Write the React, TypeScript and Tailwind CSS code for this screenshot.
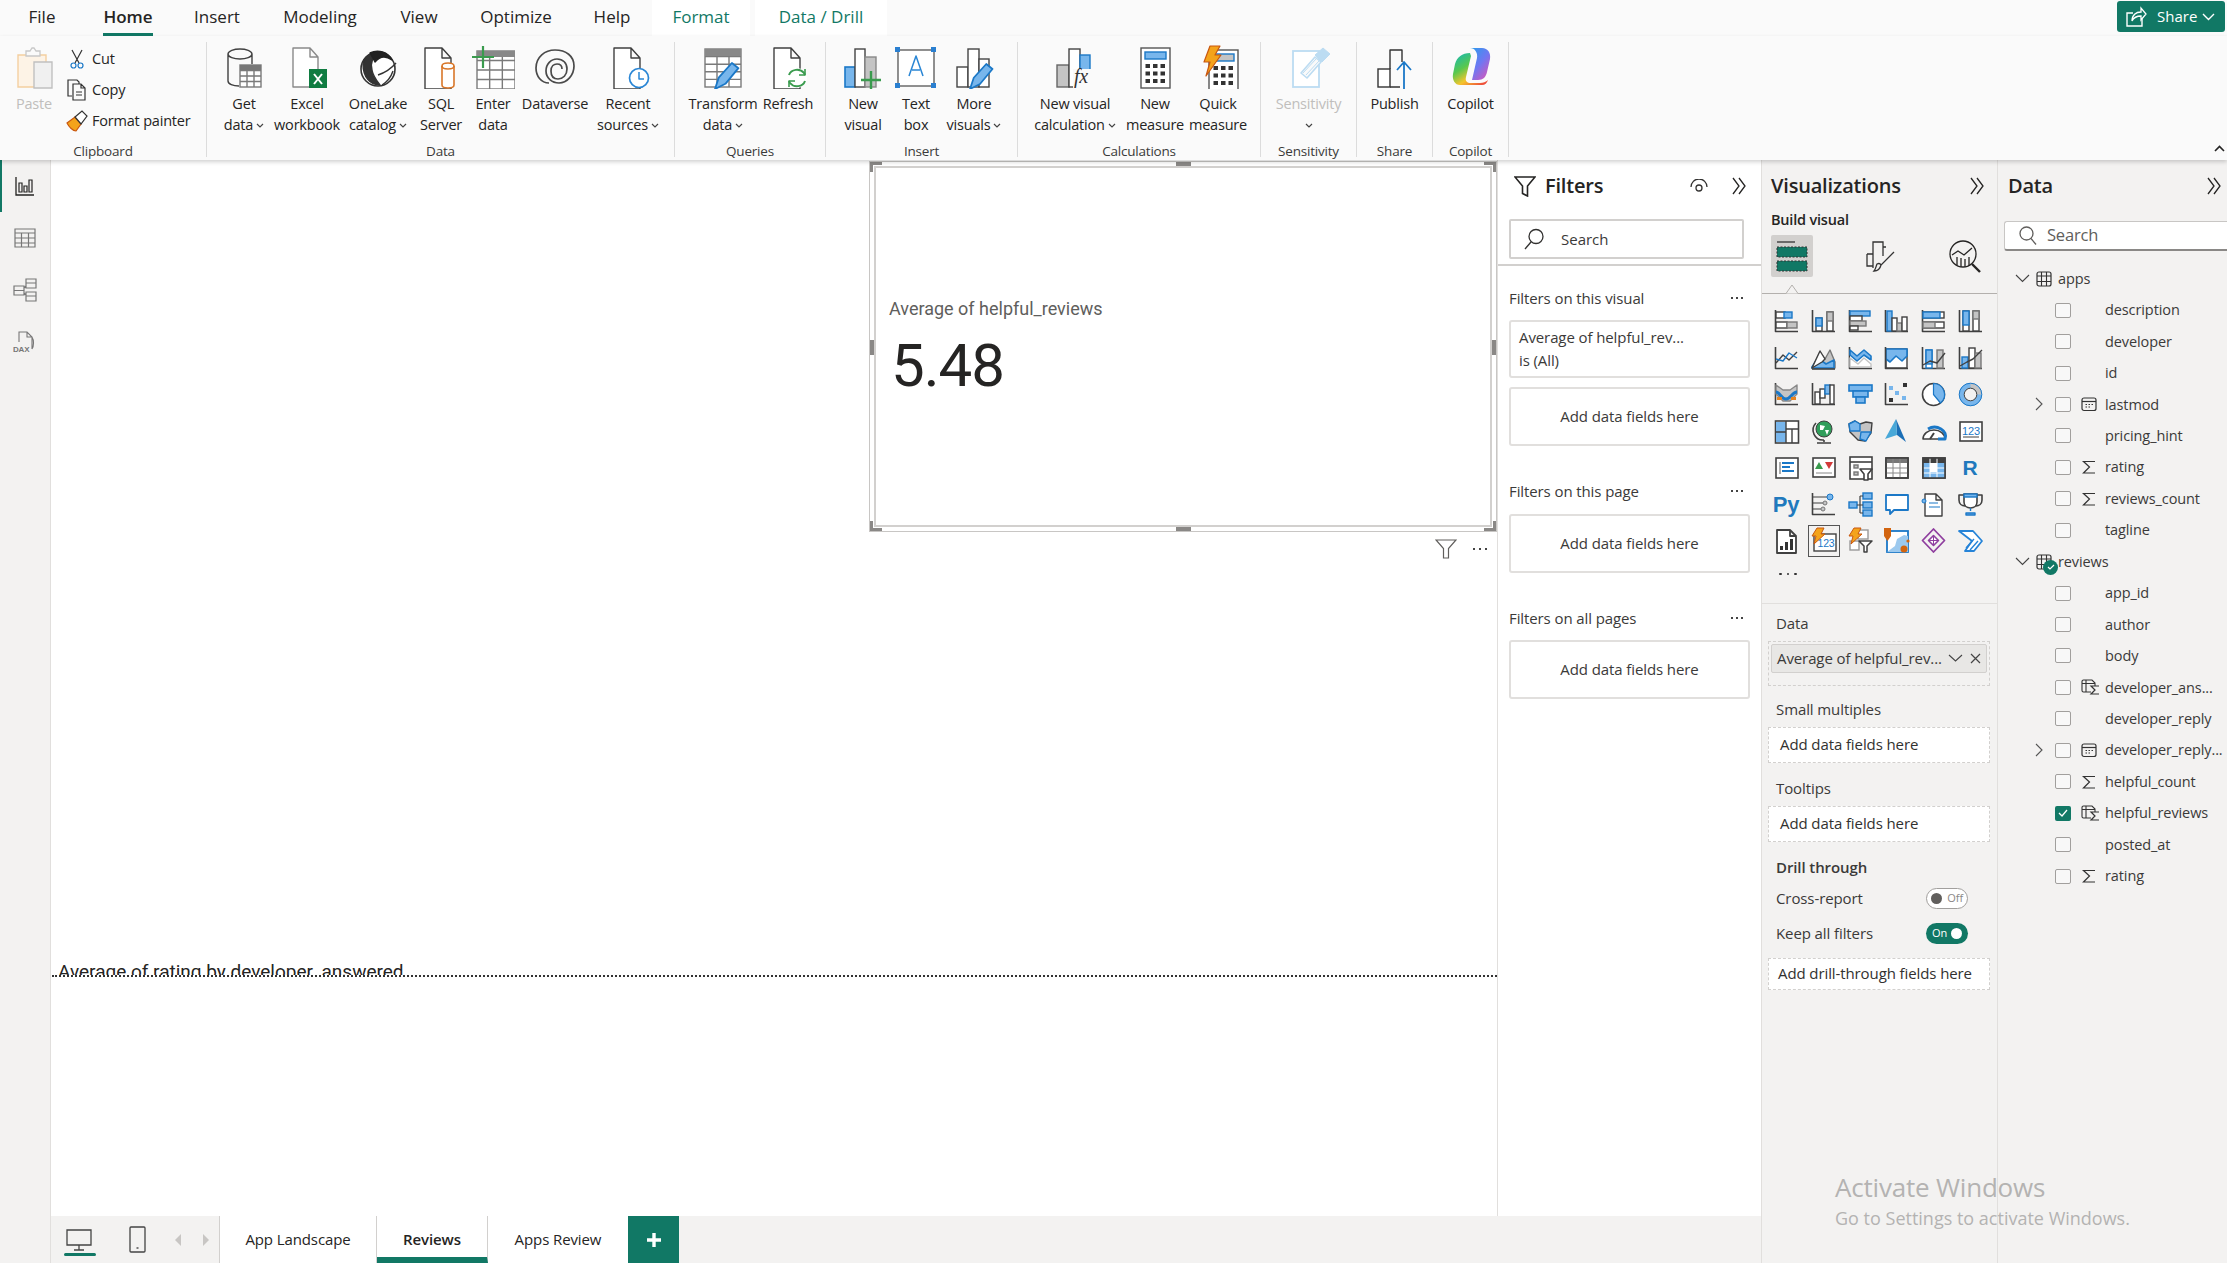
import React from "react";

const D = "#404040";
const B = "#1b78c7";
const L = "#78b6ec";
const G = "#c4c4c4";

const r = (x: number, y: number, w: number, h: number, f = "none", s = D, sw = 1.4) => (
  <rect x={x} y={y} width={w} height={h} fill={f} stroke={s} strokeWidth={sw} />
);
const p = (d: string, f = "none", s = D, sw = 1.4) => <path d={d} fill={f} stroke={s} strokeWidth={sw} strokeLinejoin="round" />;

function Ic({ w = 44, h = 44, vb, className = "", children }: { w?: number; h?: number; vb?: string; className?: string; children: React.ReactNode }) {
  return (
    <svg width={w} height={h} viewBox={vb ?? `0 0 ${w} ${h}`} fill="none" className={`shrink-0 ${className}`}>
      {children}
    </svg>
  );
}

const doc = (x: number, c = D) => p(`M${x} 3h17l9 10v31h-26z M${x + 17} 3v10h9`, "#fff", c, 1.4);
const grid = (x: number, y: number, w: number, h: number, cols: number, rows: number, c = "#7a7a7a") => {
  const ls: string[] = [];
  for (let i = 1; i < cols; i++) ls.push(`M${x + (w * i) / cols} ${y}v${h}`);
  for (let i = 1; i < rows; i++) ls.push(`M${x} ${y + (h * i) / rows}h${w}`);
  return (
    <>
      {r(x, y, w, h, "#fff", c)}
      {p(ls.join(" "), "none", c)}
    </>
  );
};
const calc = (x: number, y: number, f = L) => (
  <>
    {r(x, y, 29, 40, "#fff", "#555")}
    {r(x + 4, y + 4, 21, 7, f, B)}
    {[0, 1, 2].map((a) =>
      [0, 1, 2].map((b) => <rect key={`${a}${b}`} x={x + 4.5 + b * 7.5} y={y + 16 + a * 7.5} width={4.5} height={4} fill="#333" />)
    )}
  </>
);

const ribbon: Record<string, React.ReactNode> = {
  get: (
    <>
      {p("M6 9v27c0 3 5 5 11 5 M6 9c0-3 6-5 12-5s12 2 12 5-6 5-12 5-12-2-12-5z M30 9v10")}
      {grid(18, 20, 21, 22, 3, 4)}
      <rect x={18} y={20} width={21} height={5} fill="#777" />
    </>
  ),
  excel: (
    <>
      {p("M8 3h17l8 9v30H8z M25 3v9h8", "#fff", "#8a8a8a")}
      <rect x={24} y={24} width={18} height={19} fill="#107c41" />
      {p("M29 29l8 10M37 29l-8 10", "none", "#fff", 2)}
    </>
  ),
  lake: (
    <>
      <circle cx={22} cy={24} r={17} fill="#fff" stroke="#333" strokeWidth={1.6} />
      {p("M7 19c1-8 10-12 16-11-6 3-9 8-7 17 1 6 5 11 8 15-10 0-17-8-17-21z", "#333", "#333")}
      {p("M14 8c8-4 18-1 22 7-7-5-13-3-17 2z", "#222", "#222")}
      {p("M22 30c6-2 12-5 18-12M26 40c5-3 9-8 11-14", "none", "#333", 1.4)}
    </>
  ),
  sql: (
    <>
      {doc(6)}
      <path d="M23 21c0-2 3-3 6-3s6 1 6 3v19c0 2-3 3-6 3s-6-1-6-3z" fill="#fff" stroke="#d9772a" strokeWidth={1.6} />
      {p("M23 21c0 2 3 3 6 3s6-1 6-3", "none", "#d9772a", 1.6)}
    </>
  ),
  enter: (
    <>
      {grid(6, 6, 38, 38, 3, 4)}
      <rect x={6} y={6} width={38} height={6} fill="#888" />
      {p("M12 1v22M1 12h22", "none", "#3a9b4e", 2.2)}
    </>
  ),
  verse: (
    <>
      {p("M16 38c-8 0-13-7-13-15C3 12 12 5 22 5c11 0 19 6 19 16 0 9-7 17-15 17-7 0-13-5-13-12s5-12 11-12 10 4 10 10-4 10-9 10-7-3-7-8 3-7 6-7 5 2 5 5", "none", "#4a4a4a", 1.7)}
    </>
  ),
  recent: (
    <>
      {doc(8)}
      <circle cx={33} cy={33} r={9.5} fill="#fff" stroke="#2a86d5" strokeWidth={1.7} />
      {p("M33 27v7h5", "none", "#2a86d5", 1.5)}
    </>
  ),
  transform: (
    <>
      {grid(4, 4, 36, 38, 3, 5)}
      <rect x={4} y={4} width={36} height={7} fill="#888" />
      <g transform="translate(14 18) scale(1.3)">{p("M0 20l3-9L13 0l5 4L8 16z", L, B)}</g>
    </>
  ),
  refresh: (
    <>
      {doc(8)}
      <circle cx={31} cy={33} r={10} fill="#fff" stroke="none" />
      {p("M23 30c2-6 11-7 15-2l1 2M39 36c-2 6-11 7-15 2l-1-2", "none", "#3a9b4e", 2)}
      {p("M39 24v6h-6M23 42v-6h6", "none", "#3a9b4e", 1.6)}
    </>
  ),
  newv: (
    <>
      <rect x={4} y={22} width={10} height={20} fill={L} stroke={B} strokeWidth={1.6} />
      {r(14, 4, 10, 38, "#fff", "#444")}
      {r(24, 12, 11, 30, G, "#888")}
      {p("M30 26v18M20 35h20", "none", "#3a9b4e", 2.4)}
    </>
  ),
  text: (
    <>
      {r(4, 5, 36, 36, "#fff", "#555", 1.3)}
      {[[1, 2], [37, 2], [1, 38], [37, 38]].map(([x, y]) => (
        <rect key={`${x}${y}`} x={x} y={y} width={5} height={5} fill="#2a7fd0" />
      ))}
      {p("M15 31l7-20 7 20M18 25h8", "none", "#2a86d5", 1.5)}
    </>
  ),
  more: (
    <>
      {r(5, 22, 11, 20, "#fff", "#444")}
      {r(16, 4, 11, 38, "#fff", "#444")}
      {r(27, 14, 10, 28, "#fff", "#444")}
      <g transform="translate(18 19) scale(1.25)">{p("M0 20l3-9L13 0l5 4L8 16z", L, B)}</g>
    </>
  ),
  fx: (
    <>
      <rect x={4} y={20} width={12} height={22} fill={G} stroke="#666" strokeWidth={1.4} />
      {r(16, 4, 11, 38, "#fff", "#444")}
      <rect x={27} y={10} width={10} height={16} fill={L} stroke={B} strokeWidth={1.4} />
      <rect x={20} y={24} width={24} height={20} fill="#fafafa" />
      <text x={21} y={38} fontFamily="'Liberation Serif',serif" fontStyle="italic" fontSize={20} fill="#333">fx</text>
    </>
  ),
  measure: calc(8, 3),
  quick: (
    <>
      {calc(13, 5, G)}
      {p("M14 1h10l-5 9h6L10 31l4-14H8z", "#f4a31b", "#c9570f", 1.2)}
    </>
  ),
  sens: (
    <>
      {r(6, 6, 26, 36, "#fff", "#bcdcf2", 1.8)}
      {p("M14 28l14-16 6 5-14 16z", "#fafafa", "#bcdcf2", 1.6)}
      {p("M28 10l8-7 7 6-8 8z", "#bcdcf2", "#bcdcf2", 1)}
      {p("M16 28l13-14M19 30l13-14", "none", "#bcdcf2", 1)}
    </>
  ),
  publish: (
    <>
      {r(5, 24, 12, 18, "#fff", "#333")}
      {p("M17 24V5h12v12M17 42h10", "none", "#333")}
      {p("M31 44V18M24 25l7-8 7 8", "none", "#1b78c7", 1.8)}
    </>
  ),
  copilot: (
    <>
      <defs>
        <linearGradient id="cp1" x1="0" y1="0" x2="1" y2="1">
          <stop offset="0" stopColor="#16a6ea" />
          <stop offset="0.55" stopColor="#6f78f2" />
          <stop offset="1" stopColor="#e84fb0" />
        </linearGradient>
        <linearGradient id="cp2" x1="0.1" y1="0" x2="0.8" y2="1">
          <stop offset="0" stopColor="#17b9b0" />
          <stop offset="0.4" stopColor="#58c84e" />
          <stop offset="0.7" stopColor="#f5c52c" />
          <stop offset="1" stopColor="#ee4f3a" />
        </linearGradient>
      </defs>
      <path d="M15 3h18c6 0 9 5 8 11l-3 13c-1 5-4 8-9 8h-6l5-22c1-5-2-10-7-10z" fill="url(#cp1)" />
      <path d="M21 8c-8 0-13 4-15 11l-2 10c-1 6 2 11 7 11h22c3 0 5-2 6-5-2 2-5 3-8 3h-9c-4 0-6-2-5-6l5-21z" fill="url(#cp2)" />
    </>
  ),
};

const Ax = p("M1.5 1v21.5H24", "none", D, 1.6);
const viz: React.ReactNode[] = [
  <>{Ax}{r(2, 3, 9, 6, "#fff")}{r(10, 3, 8, 6, L, B)}{r(2, 13, 11, 6, "#fff")}{r(13, 13, 10, 6, G, "#777")}</>,
  <>{Ax}{r(5, 9, 6, 13, "#fff")}{r(5, 9, 6, 8, L, B)}{r(16, 3, 6, 19, "#fff")}{r(16, 3, 6, 9, G, "#777")}</>,
  <>{Ax}{r(2, 2, 20, 5, L, B)}{r(2, 7, 12, 5, "#fff")}{r(2, 12, 16, 5, G, "#777")}{r(2, 17, 8, 4, "#fff")}</>,
  <>{Ax}{r(3, 2, 5, 20, L, B)}{r(8, 9, 5, 13, "#fff")}{r(13, 14, 5, 8, G, "#777")}{r(18, 8, 5, 14, "#fff")}</>,
  <>{Ax}{r(2, 3, 21, 6, "#fff")}{r(2, 3, 17, 6, L, B)}{r(2, 13, 21, 6, "#fff")}{r(2, 13, 12, 6, G, "#777")}</>,
  <>{Ax}{r(5, 2, 6, 20, "#fff")}{r(5, 2, 6, 14, L, B)}{r(15, 2, 6, 20, "#fff")}{r(15, 2, 6, 8, G, "#777")}</>,

  <>{Ax}{p("M2 17l7-8 6 5 8-8", "none", D, 1.4)}{p("M2 13l7 2 6-8 8 5", "none", B, 1.4)}</>,
  <>{p("M1 22L9 6l5 7 5-9 5 12v6z", G, "#777")}{p("M1 22V21l6-9 8 6 8-4v8z", L, B, 1.6)}{p("M1 22L9 5l5 8-3 3z", "#fff", D)}{p("M1 23h23", "none", D, 1.6)}</>,
  <>{Ax}{p("M2 6l7 5 6-5 8 5v10H2z", "#fff", "none")}{p("M2 4l7 6 7-6 7 6v4l-7-5-7 6-7-6z", L, B, 1.6)}{p("M2 12l8 6 6-6 7 6v3H2z", "#fff", G)}</>,
  <>{r(2, 3, 21, 19, "#fff", D)}{p("M2 3h21v7l-5 5-6-5-6 6-4-3z", L, B, 1.6)}{Ax}</>,
  <>{Ax}{r(5, 4, 6, 18, "#fff", B)}{r(5, 4, 6, 14, L, B)}{r(16, 4, 6, 18, G, "#777")}{p("M2 19l7-4 7 2 8-10", "none", D, 1.4)}</>,
  <>{Ax}{r(4, 11, 6, 11, L, B)}{r(11, 2, 6, 20, "#fff")}{r(17, 7, 6, 15, G, "#777")}{p("M2 20l7-4 6-3 9-9", "none", D, 1.4)}</>,

  <>{Ax}{p("M2 3l7 5h7l7-5v9l-7 7H9l-7-7z", G, "#888")}{p("M2 10c4 0 5 7 10 7s6-7 11-7", "none", B, 3)}<rect x={3} y={15} width={5} height={3} fill="#e8841f" /><rect x={17} y={15} width={5} height={3} fill="#e8841f" /></>,
  <>{Ax}{r(4, 10, 5, 12, "#fff")}{r(9, 7, 5, 9, "#fff")}{r(14, 3, 5, 9, L, B)}{r(19, 3, 4, 19, "#fff")}</>,
  <>{r(1, 3, 23, 6, L, B, 1.6)}{r(5, 9, 15, 6, L, B, 1.6)}{r(8, 15, 9, 6, L, B, 1.6)}</>,
  <>{Ax}<rect x={5} y={4} width={4} height={4} fill={L} /><rect x={19} y={1} width={4} height={4} fill="#333" /><rect x={11} y={9} width={4} height={4} fill={L} /><rect x={5} y={16} width={4} height={4} fill="#333" /><rect x={18} y={14} width={4} height={4} fill={L} /></>,
  <><circle cx={12.5} cy={12.5} r={11} fill="#fff" stroke={D} strokeWidth={1.6} />{p("M12.5 1.5a11 11 0 0 1 7 19.5l-7-8.5z", L, B, 1.2)}</>,
  <><circle cx={12.5} cy={12.5} r={9} fill="none" stroke={L} strokeWidth={5} /><path d="M12.5 3.500a9 9 0 0 1 9 9" fill="none" stroke={G} strokeWidth={5} /><circle cx={12.5} cy={12.5} r={11.3} stroke={B} strokeWidth={1} /><circle cx={12.5} cy={12.5} r={6.3} stroke={D} strokeWidth={1} /></>,

  <>{r(1.5, 2, 23, 22, "#fff", D, 1.6)}<rect x={2} y={3} width={10} height={20} fill={L} />{p("M12 2v22M2 13h10M12 10h12M18 10v14", "none", D, 1.4)}</>,
  <><circle cx={13} cy={10} r={8} fill="#2f9e5a" stroke={D} />{p("M9 6l5 1-2 4h-3zM14 11h4l-2 5z", "#fff", "none")}{p("M5 4a10 10 0 0 0 8 17M13 21v2M6 24h14", "none", D, 1.6)}</>,
  <>{p("M1 5l6-3 5 3 6-2 6 1-1 10-6 8-7-1-5-5-3-3z", G, D)}{p("M7 2l5 3v7H2L1 5z", L, B)}{p("M13 13h10l-5 9-6-2z", L, B)}</>,
  <>{p("M12 0l10 23-9-7z", "#1b6fb6", "none")}{p("M12 0L1 20l12-4z", "#48a8d8", "none")}</>,
  <>{p("M2 20a11 9 0 0 1 22 0z", "#fff", D, 1.6)}{p("M7 10a11 9 0 0 1 17 10h-7", "none", B, 3)}{p("M9 20l4-6", "none", D, 2)}</>,
  <>
    {r(2, 3, 22, 19, "#fff", D, 1.6)}
    {p("M5 18h16", "none", D, 1)}
    <text x={13} y={16} textAnchor="middle" fontSize={11} fontFamily="'Liberation Sans',sans-serif" fill={B}>123</text>
  </>,

  <>{r(2, 3, 22, 20, "#fff", D, 1.6)}{p("M6 7v12", "none", "#888", 1.4)}{p("M8 8h12M8 12h8M8 16h12", "none", B, 1.8)}</>,
  <>{r(2, 3, 22, 19, "#fff", D, 1.6)}{p("M8 7l4 7H4z", "#3a9b4e", "none")}{p("M14 7h8l-4 7z", "#d23a3a", "none")}{p("M5 18h16", "none", "#888", 1)}</>,
  <>{r(2, 2, 22, 22, "#fff", D, 1.6)}{p("M2 7h22", "none", D, 1.6)}{r(6, 10, 4, 3, G, "#777")}{r(6, 17, 4, 3, G, "#777")}{p("M12 14h12l-4 5v6h-4v-6z", "#fff", D, 1.6)}</>,
  grid24(false),
  grid24(true),
  <text x={12} y={20} textAnchor="middle" fontSize={21} fontWeight={700} fontFamily="'Liberation Sans',sans-serif" fill="#2079bd">R</text>,

  <text x={12} y={20} textAnchor="middle" fontSize={22} fontWeight={700} fontFamily="'Liberation Sans',sans-serif" fill="#2079bd">Py</text>,
  <>{Ax}{p("M2 5h14M2 11h10M2 17h8", "none", D, 1.2)}<circle cx={19} cy={5} r={3} fill={L} stroke={B} /><circle cx={14} cy={11} r={2} fill={G} stroke="#777" /><circle cx={12} cy={17} r={2} fill={G} stroke="#777" /></>,
  <>{r(1, 10, 8, 6, L, B)}{r(15, 1, 9, 6, L, B)}{r(15, 10, 9, 6, L, B)}{r(15, 18, 9, 6, L, B)}{p("M9 13h6M12 4v17M12 4h3M12 21h3", "none", D, 1.2)}</>,
  p("M2 3h22v15H10l-4 4v-4H2z", "#fff", B, 1.8),
  <>{p("M4 2h11l6 6v16H4z M15 2v6h6", "#fff", D, 1.4)}<circle cx={3} cy={9} r={2} fill={L} stroke={B} />{p("M8 11h9M8 15h11", "none", B, 1.2)}</>,
  <>{p("M6 3H1v5c0 4 3 6 6 6M19 3h5v5c0 4-3 6-6 6", "none", D, 1.6)}{p("M6 2h13v8c0 4-3 6-6.5 6S6 14 6 10z", "#fff", D, 1.6)}{r(6, 2, 13, 3, L, B)}{p("M12.5 16v3M8 23h9v-2H8z", L, B, 1.4)}</>,

  <>{p("M3 2h13l6 6v17H3z M16 2v6h6", "#fff", D, 1.8)}<rect x={6} y={18} width={3} height={4} fill="#333" /><rect x={11} y={14} width={3} height={8} fill="#333" /><rect x={16} y={11} width={3} height={11} fill="#333" /></>,
  <><rect x={-2.500} y={-2.500} width={31} height={31} fill="none" stroke="#555" strokeWidth={1} />{r(3, 6, 22, 17, "#fff", D, 1.4)}<text x={15} y={19} textAnchor="middle" fontSize={10.5} fontFamily="'Liberation Sans',sans-serif" fill={B}>123</text>{p("M6 0h7l-3 6h4L3 16l2-8H1z", "#f4a31b", "#c9570f", 1)}</>,
  <>{r(10, 2, 10, 9, "#fff", "#999")}{r(2, 13, 9, 9, "#fff", "#999")}{p("M11 13h13l-5 5v6h-3v-6z", "#fff", D, 1.5)}{p("M6 0h7l-3 6h4L3 16l2-8H1z", "#f4a31b", "#c9570f", 1)}</>,
  <>{r(3, 3, 21, 21, "#fff", B, 1.8)}{p("M3 24l8-6 2-7 7-4 4 1v16z", "#9cc9ee", "none")}{p("M0 0h7v8l-3.5 5L0 8z", "#d2640f", "none")}<circle cx={20} cy={21} r={3.5} fill="#d2640f" /><circle cx={24} cy={13} r={1.6} fill="#d2640f" /></>,
  <>{p("M12.5 1l11 11.5L12.5 24 1.5 12.5z", "none", "#8f3f9f", 1.8)}{p("M7.5 12.5l5-5 5 5-5 5z", "#fff", "#8f3f9f", 1.6)}{p("M12.5 7.500v10M7.500 12.500h10", "none", "#8f3f9f", 1)}</>,
  <>{p("M1 3h14l9 10-8 10H7l7-10z", "#fff", "#2684d8", 1.8)}{p("M8 20l8-9M12 22l8-9", "none", "#2684d8", 1.4)}</>,
];
function grid24(m: boolean) {
  return (
    <>
      {r(2, 3, 22, 20, "#fff", D, 1.6)}
      <rect x={2} y={3} width={22} height={5} fill={m ? D : "#777"} />
      {m && <rect x={2} y={8} width={22} height={15} fill={L} />}
      {m && <rect x={9} y={8} width={7} height={9} fill="#fff" />}
      {p("M9 3v20M16 3v20M2 13h22M2 18h22", "none", m ? "#fff" : "#888", 1)}
      {r(2, 3, 22, 20, "none", D, 1.6)}
    </>
  );
}

const Caret = ({ className = "" }: { className?: string }) => (
  <svg width={8} height={6} viewBox="0 0 8 6" fill="none" className={`inline-block ${className}`}>
    <path d="M1 1l3 3 3-3" stroke="#444" strokeWidth={1.2} />
  </svg>
);

function RBtn({ w, icon, l1, l2, caret, gray }: { w: number; icon: string; l1: string; l2?: string; caret?: boolean; gray?: boolean }) {
  return (
    <div className={`flex flex-col items-center ${gray ? "text-[#c0bebc]" : "text-[#252423]"}`} style={{ width: w }}>
      <Ic className="mt-[9px]">{ribbon[icon]}</Ic>
      <div className="mt-[4px] h-[21px] leading-[21px] whitespace-nowrap">{l1}</div>
      <div className="h-[21px] leading-[21px] whitespace-nowrap">
        {l2}
        {caret && <Caret className={l2 ? "ml-[3px] align-middle" : "align-middle"} />}
      </div>
    </div>
  );
}

function Group({ w, label, children }: { w: number; label: string; children: React.ReactNode }) {
  return (
    <div className="relative mt-[6px] flex h-[115px] flex-col border-r border-[#dcdcdc]" style={{ width: w }}>
      <div className="-mt-[6px] flex h-[100px] shrink-0">{children}</div>
      <div className="mt-[6px] shrink-0 text-center text-[13.5px] leading-[18px] text-[#3b3a39]">{label}</div>
    </div>
  );
}

function Chevrons({ className = "" }: { className?: string }) {
  return (
    <svg width={16} height={18} viewBox="0 0 16 18" fill="none" className={className}>
      <path d="M2 1l6 8-6 8M8 1l6 8-6 8" stroke="#252423" strokeWidth={1.3} />
    </svg>
  );
}

function FilterCard({ children, h = 59, mt }: { children: React.ReactNode; h?: number; mt: number }) {
  return (
    <div className="mx-[11px] flex w-[241px] items-center justify-center rounded-[3px] border-2 border-[#e1dfdd] bg-white text-[15px] tracking-[-0.1px] text-[#3b3a39]" style={{ height: h, marginTop: mt }}>
      {children}
    </div>
  );
}

function FilterLabel({ text, mt }: { text: string; mt: number }) {
  return (
    <div className="mx-[11px] flex h-[24px] w-[241px] items-center justify-between text-[15px] tracking-[-0.1px] text-[#3b3a39]" style={{ marginTop: mt }}>
      <span>{text}</span>
      <span className="mr-[7px] flex gap-[3px]">
        <i className="h-[2px] w-[2px] bg-[#444]" />
        <i className="h-[2px] w-[2px] bg-[#444]" />
        <i className="h-[2px] w-[2px] bg-[#444]" />
      </span>
    </div>
  );
}

function Zone({ text, mt, h = 36, pl = 11 }: { text: string; mt: number; h?: number; pl?: number }) {
  return (
    <div className="mx-[6px] flex w-[222px] items-center border border-dashed border-[#d2d0ce] bg-white text-[15px] tracking-[-0.1px] text-[#323130]" style={{ marginTop: mt, height: h, paddingLeft: pl }}>
      {text}
    </div>
  );
}

function VLabel({ text, mt, bold }: { text: string; mt: number; bold?: boolean }) {
  return (
    <div className={`ml-[14px] h-[20px] text-[15px] leading-[20px] tracking-[-0.1px] ${bold ? "font-semibold text-[#3b3a39]" : "text-[#3b3a39]"}`} style={{ marginTop: mt }}>
      {text}
    </div>
  );
}

const TableIcon = () => (
  <Ic w={16} h={16}>
    <rect x={1} y={1} width={14} height={14} rx={2} stroke="#333" strokeWidth={1.2} />
    <path d="M1 5h14M1 10.5h14M5.5 1v14M10.5 1v14" stroke="#333" strokeWidth={1.1} />
  </Ic>
);
const FieldIcon = ({ t }: { t: string }) => {
  if (t === "sum")
    return (
      <Ic w={16} h={16}>
        <path d="M14 2.5H2.5L8.5 8l-6 6H14" stroke="#333" strokeWidth={1.2} />
      </Ic>
    );
  if (t === "cal")
    return (
      <Ic w={16} h={16}>
        <rect x={1} y={2} width={14} height={12.5} rx={2} stroke="#333" strokeWidth={1.2} />
        <path d="M1 5.5h14" stroke="#333" strokeWidth={1.2} />
        <path d="M4.5 8.5h1.5M7.5 8.5h1.5M10.5 8.5h1.5M4.5 11h1.5M7.5 11h1.5" stroke="#333" strokeWidth={1.1} />
      </Ic>
    );
  if (t === "meas")
    return (
      <Ic w={19} h={16}>
        <path d="M10 13H2.5A1.5 1.5 0 0 1 1 11.500V2.500A1.5 1.500 0 0 1 2.500 1H11l3 3v3M1 4.500h13M5 1v12" stroke="#333" strokeWidth={1.1} />
        <path d="M18 7h-8l4 4-4 4h8" stroke="#333" strokeWidth={1.2} />
      </Ic>
    );
  return null;
};

type F = [string, string, boolean?, boolean?];
const fields: F[] = [
  ["description", ""],
  ["developer", ""],
  ["id", ""],
  ["lastmod", "cal", true],
  ["pricing_hint", ""],
  ["rating", "sum"],
  ["reviews_count", "sum"],
  ["tagline", ""],
];
const fields2: F[] = [
  ["app_id", ""],
  ["author", ""],
  ["body", ""],
  ["developer_ans...", "meas"],
  ["developer_reply", ""],
  ["developer_reply...", "cal", true],
  ["helpful_count", "sum"],
  ["helpful_reviews", "meas", false, true],
  ["posted_at", ""],
  ["rating", "sum"],
];

function FieldRow({ f }: { f: F }) {
  const [name, t, exp, checked] = f;
  return (
    <div className="flex h-[31.45px] items-center whitespace-nowrap text-[14.5px] tracking-[-0.1px] text-[#3b3a39]">
      <div className="ml-[35px] w-[22px]">
        {exp && (
          <svg width={9} height={14} viewBox="0 0 9 14" fill="none" className="ml-[2px]">
            <path d="M1 1l6 6-6 6" stroke="#555" strokeWidth={1.1} />
          </svg>
        )}
      </div>
      {checked ? (
        <div className="flex h-[15px] w-[16px] items-center justify-center rounded-[2px] bg-[#117865]">
          <svg width={10} height={8} viewBox="0 0 10 8" fill="none">
            <path d="M1 4l3 3 5-6" stroke="#fff" strokeWidth={1.3} />
          </svg>
        </div>
      ) : (
        <div className="h-[15px] w-[16px] rounded-[2px] border border-[#a19f9d] bg-[#f8f8f8]" />
      )}
      <div className="ml-[10px] w-[24px]">
        <FieldIcon t={t} />
      </div>
      <span>{name}</span>
    </div>
  );
}

function TableRow({ name, badge }: { name: string; badge?: boolean }) {
  return (
    <div className="flex h-[31.45px] items-center whitespace-nowrap text-[14.5px] tracking-[-0.1px] text-[#3b3a39]">
      <svg width={15} height={9} viewBox="0 0 15 9" fill="none" className="ml-[17px]">
        <path d="M1 1l6.500 6.500L14 1" stroke="#444" strokeWidth={1.1} />
      </svg>
      <div className="relative ml-[6px] mr-[6px]">
        <TableIcon />
        {badge && (
          <div className="absolute left-[7px] top-[6px] flex h-[15px] w-[15px] items-center justify-center rounded-full bg-[#117865]">
            <svg width={8} height={6} viewBox="0 0 8 6" fill="none">
              <path d="M1 3l2 2 4-4" stroke="#fff" strokeWidth={1.2} />
            </svg>
          </div>
        )}
      </div>
      <span>{name}</span>
    </div>
  );
}

function Handle({ className }: { className: string }) {
  return <div className={`absolute bg-[#8a8886] ${className}`} />;
}

export default function App() {
  return (
    <div className="relative flex h-[1263px] w-[2227px] flex-col overflow-hidden bg-white font-['Open_Sans','Noto_Sans',sans-serif] text-[14.5px] tracking-[-0.2px] text-[#252423]">
      {/* Menu tabs */}
      <div className="flex h-[36px] items-start bg-[#fafafa] text-[17px] tracking-normal">
        {[
          ["File", 84],
          ["Home", 88],
          ["Insert", 90],
          ["Modeling", 116],
          ["View", 82],
          ["Optimize", 112],
          ["Help", 80],
        ].map(([t, w]) => (
          <div key={t as string} className={`relative flex h-[34px] items-center justify-center ${t === "Home" ? "font-semibold" : ""}`} style={{ width: w as number }}>
            {t}
            {t === "Home" && <div className="absolute bottom-[-2px] h-[3px] w-[50px] bg-[#117865]" />}
          </div>
        ))}
        <div className="flex h-[36px] w-[98px] items-center justify-center bg-white pb-[2px] font-medium text-[#117865]">Format</div>
        <div className="ml-[5px] flex h-[36px] w-[132px] items-center justify-center bg-white pb-[2px] font-medium text-[#117865]">Data / Drill</div>
        <div className="ml-auto mr-[2px] mt-[1px] flex h-[31px] w-[108px] items-center rounded-[3px] bg-[#117865] pl-[8px] text-[15px] text-white">
          <svg width={22} height={22} viewBox="0 0 22 22" fill="none">
            <path d="M17 13v7H2V7h6" stroke="#fff" strokeWidth={1.4} />
            <path d="M7 15c0-6 4-9 9-9V2l5 6-5 6V10c-4 0-7 1-9 5z" stroke="#fff" strokeWidth={1.3} />
          </svg>
          <span className="ml-[10px]">Share</span>
          <svg width={13} height={8} viewBox="0 0 13 8" fill="none" className="ml-[5px]">
            <path d="M1 1l5.500 5.500L12 1" stroke="#fff" strokeWidth={1.4} />
          </svg>
        </div>
      </div>

      {/* Ribbon */}
      <div className="relative z-10 flex h-[124px] items-start bg-[#fafafa] shadow-[0_2px_4px_rgba(0,0,0,0.18)]">
        <Group w={207} label="Clipboard">
          <div className="flex w-[68px] flex-col items-center text-[#c0bebc]">
            <svg width={44} height={44} viewBox="0 0 44 44" fill="none" className="mt-[9px]">
              <path d="M6 10h28v32H6z" fill="#fdf3e6" stroke="#f4cfa0" strokeWidth={1.4} />
              <path d="M14 10V6h4l2-3h2l2 3h4v5H14z" fill="#fafafa" stroke="#c8c8c8" strokeWidth={1.3} />
              <path d="M22 17h18v26H22z" fill="#f0f0f0" stroke="#c0c0c0" strokeWidth={1.4} />
            </svg>
            <div className="mt-[4px] h-[21px] leading-[21px]">Paste</div>
          </div>
          <div className="-ml-[6px] flex flex-col pt-[7px]">
            {[
              ["Cut", "cut"],
              ["Copy", "copy"],
              ["Format painter", "paint"],
            ].map(([t, k]) => (
              <div key={k} className="flex h-[31px] items-center whitespace-nowrap">
                <div className="flex w-[30px] justify-center">
                  {k === "cut" && (
                    <svg width={16} height={20} viewBox="0 0 16 20" fill="none">
                      <path d="M3 1l7 13M13 1L6 14" stroke="#333" strokeWidth={1.2} />
                      <circle cx={4.500} cy={16.500} r={2.500} stroke="#1b78c7" strokeWidth={1.2} />
                      <circle cx={11.500} cy={16.500} r={2.500} stroke="#1b78c7" strokeWidth={1.2} />
                    </svg>
                  )}
                  {k === "copy" && (
                    <svg width={20} height={22} viewBox="0 0 20 22" fill="none">
                      <path d="M5 17H1V1h9l2 2v2" stroke="#333" strokeWidth={1.2} />
                      <path d="M6 5h8l4 4v12H6zM14 5v4h4M9 13h6M9 16h6" stroke="#333" strokeWidth={1.2} />
                    </svg>
                  )}
                  {k === "paint" && (
                    <svg width={22} height={22} viewBox="0 0 22 22" fill="none">
                      <path d="M1 13l8-6 6 7-5 7c-3 0-7-4-9-8z" fill="#f4a31b" stroke="#c9570f" strokeWidth={1.2} />
                      <path d="M9 7l7-6 5 5-6 8z" fill="#fff" stroke="#333" strokeWidth={1.2} />
                    </svg>
                  )}
                </div>
                <span>{t}</span>
              </div>
            ))}
          </div>
        </Group>
        <Group w={468} label="Data">
          <RBtn w={74} icon="get" l1="Get" l2="data" caret />
          <RBtn w={52} icon="excel" l1="Excel" l2="workbook" />
          <RBtn w={90} icon="lake" l1="OneLake" l2="catalog" caret />
          <RBtn w={36} icon="sql" l1="SQL" l2="Server" />
          <RBtn w={68} icon="enter" l1="Enter" l2="data" />
          <RBtn w={56} icon="verse" l1="Dataverse" />
          <RBtn w={90} icon="recent" l1="Recent" l2="sources" caret />
        </Group>
        <Group w={151} label="Queries">
          <RBtn w={96} icon="transform" l1="Transform" l2="data" caret />
          <RBtn w={34} icon="refresh" l1="Refresh" />
        </Group>
        <Group w={192} label="Insert">
          <RBtn w={74} icon="newv" l1="New" l2="visual" />
          <RBtn w={32} icon="text" l1="Text" l2="box" />
          <RBtn w={84} icon="more" l1="More" l2="visuals" caret />
        </Group>
        <Group w={243} label="Calculations">
          <RBtn w={114} icon="fx" l1="New visual" l2="calculation" caret />
          <RBtn w={46} icon="measure" l1="New" l2="measure" />
          <RBtn w={80} icon="quick" l1="Quick" l2="measure" />
        </Group>
        <Group w={96} label="Sensitivity">
          <RBtn w={95} icon="sens" l1="Sensitivity" caret gray />
        </Group>
        <Group w={76} label="Share">
          <RBtn w={75} icon="publish" l1="Publish" />
        </Group>
        <Group w={76} label="Copilot">
          <RBtn w={75} icon="copilot" l1="Copilot" />
        </Group>
        <svg width={11} height={7} viewBox="0 0 11 7" fill="none" className="absolute right-[2px] top-[109px]">
          <path d="M1 6l4.500-4.500L10 6" stroke="#252423" strokeWidth={1.6} />
        </svg>
      </div>

      {/* Body */}
      <div className="flex min-h-0 flex-1">
        {/* Rail */}
        <div className="w-[51px] shrink-0 border-r border-[#e1dfdd] bg-[#f3f2f1]">
          <div className="flex h-[52px] items-center justify-center border-l-2 border-[#117865] pr-[2px]">
            <svg width={20} height={20} viewBox="0 0 20 20" fill="none">
              <path d="M1 1v18h18" stroke="#252423" strokeWidth={1.3} />
              <path d="M4 7h3v9H4zM9 10h3v6H9zM14 4h3v12h-3z" stroke="#252423" strokeWidth={1.2} />
            </svg>
          </div>
          <div className="flex h-[52px] items-center justify-center">
            <svg width={22} height={20} viewBox="0 0 22 20" fill="none">
              <path d="M1 1h20v18H1zM1 5h20M1 10h20M1 15h20M7.500 5v14M14.500 5v14" stroke="#777" strokeWidth={1.2} />
            </svg>
          </div>
          <div className="flex h-[52px] items-center justify-center">
            <svg width={24} height={24} viewBox="0 0 24 24" fill="none">
              <path d="M1 8h10v9H1zM1 12.500h10M13 1h10v9H13zM13 5h10M13 14h10v9H13zM13 18h10M11 10l2-2M11 15l2 2" stroke="#777" strokeWidth={1.2} />
            </svg>
          </div>
          <div className="flex h-[52px] items-center justify-center">
            <svg width={24} height={24} viewBox="0 0 24 24" fill="none">
              <path d="M6 12V2h8l5 5v12M19 7c2 3 2 9 0 12M14 2v5h5" stroke="#777" strokeWidth={1.1} />
              <text x={0} y={22} fontSize={8} fontWeight={700} fontFamily="'Liberation Sans',sans-serif" fill="#777">DAX</text>
            </svg>
          </div>
        </div>

        {/* Middle */}
        <div className="flex w-[1710px] shrink-0 flex-col">
          <div className="flex min-h-0 flex-1">
            {/* Canvas */}
            <div className="relative flex-1 overflow-hidden bg-white">
              <div className="absolute left-[818px] top-[1px] h-[371px] w-[628px] border border-[#c8c6c4]">
                <div className="absolute inset-[4px] border-2 border-[#d2d0ce] pl-[13px] pt-[129px]">
                  <div className="font-['Roboto',sans-serif] text-[18px] leading-[24px] tracking-normal text-[#605e5c]">Average of helpful_reviews</div>
                  <div className="ml-[2px] mt-[9px] font-['Roboto',sans-serif] text-[60px] leading-[72px] tracking-[-1px] text-[#252423]">5.48</div>
                </div>
                <Handle className="left-0 top-0 h-[10px] w-[3px]" />
                <Handle className="left-0 top-0 h-[3px] w-[12px]" />
                <Handle className="right-0 top-0 h-[10px] w-[3px]" />
                <Handle className="right-0 top-0 h-[3px] w-[12px]" />
                <Handle className="bottom-0 left-0 h-[10px] w-[3px]" />
                <Handle className="bottom-0 left-0 h-[3px] w-[12px]" />
                <Handle className="bottom-0 right-0 h-[10px] w-[3px]" />
                <Handle className="bottom-0 right-0 h-[3px] w-[12px]" />
                <Handle className="left-[306px] top-0 h-[4px] w-[15px]" />
                <Handle className="bottom-0 left-[306px] h-[4px] w-[15px]" />
                <Handle className="left-0 top-[178px] h-[15px] w-[4px]" />
                <Handle className="right-0 top-[178px] h-[15px] w-[4px]" />
              </div>
              <svg width={22} height={20} viewBox="0 0 22 20" fill="none" className="absolute left-[1384px] top-[379px]">
                <path d="M1 1h20l-7.500 8.500V19h-5V9.500z" stroke="#605e5c" strokeWidth={1.2} />
              </svg>
              <div className="absolute left-[1422px] top-[388px] flex gap-[4px]">
                <i className="h-[2px] w-[2px] bg-[#444]" />
                <i className="h-[2px] w-[2px] bg-[#444]" />
                <i className="h-[2px] w-[2px] bg-[#444]" />
              </div>
              <div className="absolute left-[1px] top-[798px] h-[19px] w-[1445px] overflow-hidden border-b-2 border-dotted border-[#333] pl-[6px] pt-[3px]">
                <div className="whitespace-nowrap font-['Roboto',sans-serif] text-[19px] leading-[22px] tracking-normal text-[#252423]">Average of rating by developer_answered</div>
              </div>
            </div>

            {/* Filters */}
            <div className="w-[264px] shrink-0 border-l border-[#e1dfdd] bg-white">
              <div className="flex h-[52px] items-center pl-[16px] pr-[14px]">
                <svg width={22} height={22} viewBox="0 0 22 22" fill="none">
                  <path d="M1 2h20l-7.500 9v10l-5-2.500V11z" stroke="#252423" strokeWidth={1.6} />
                </svg>
                <span className="ml-[9px] text-[20px] font-semibold">Filters</span>
                <svg width={18} height={14} viewBox="0 0 18 14" fill="none" className="ml-auto mr-[23px]">
                  <path d="M1 8a8 8 0 0 1 16 0" stroke="#323130" strokeWidth={1.3} />
                  <circle cx={9} cy={9} r={3} stroke="#323130" strokeWidth={1.3} />
                </svg>
                <Chevrons />
              </div>
              <div className="border-b-2 border-[#d2d0ce] pb-[5px] pt-[7px]">
                <div className="mx-[11px] flex h-[40px] w-[235px] items-center rounded-[2px] border-2 border-[#d2d0ce] pl-[12px]">
                  <svg width={22} height={22} viewBox="0 0 22 22" fill="none">
                    <circle cx={13} cy={8.500} r={7} stroke="#323130" strokeWidth={1.3} />
                    <path d="M8 14l-6 7" stroke="#323130" strokeWidth={1.3} />
                  </svg>
                  <span className="ml-[16px] text-[15px] tracking-normal text-[#3b3a39]">Search</span>
                </div>
              </div>
              <FilterLabel text="Filters on this visual" mt={20} />
              <div className="mx-[11px] mt-[10px] flex h-[58px] w-[241px] flex-col justify-center rounded-[3px] border-2 border-[#e1dfdd] pl-[8px] text-[15px] leading-[23px] tracking-[-0.1px] text-[#3b3a39]">
                <div>Average of helpful_rev...</div>
                <div>is (All)</div>
              </div>
              <FilterCard mt={9}>Add data fields here</FilterCard>
              <FilterLabel text="Filters on this page" mt={33} />
              <FilterCard mt={11}>Add data fields here</FilterCard>
              <FilterLabel text="Filters on all pages" mt={33} />
              <FilterCard mt={10}>Add data fields here</FilterCard>
            </div>
          </div>

          {/* Page tabs */}
          <div className="flex h-[47px] shrink-0 items-stretch bg-[#f3f2f1] text-[15px] tracking-[-0.1px]">
            <div className="relative flex w-[168px] items-center">
              <svg width={26} height={24} viewBox="0 0 26 24" fill="none" className="ml-[15px]">
                <path d="M1 2h24v15H1zM13 17v5M8 22h10" stroke="#444" strokeWidth={1.3} />
              </svg>
              <div className="absolute bottom-[7px] left-[13px] h-[3px] w-[32px] rounded-full bg-[#117865]" />
              <svg width={17} height={27} viewBox="0 0 17 27" fill="none" className="ml-[37px]">
                <rect x={1} y={1} width={15} height={25} rx={1} stroke="#444" strokeWidth={1.3} />
                <path d="M7.500 22h2" stroke="#444" strokeWidth={1.4} />
              </svg>
              <svg width={7} height={12} viewBox="0 0 7 12" className="ml-[29px] shrink-0"><path d="M6 0v12L0 6z" fill="#c8c6c4" /></svg>
              <svg width={7} height={12} viewBox="0 0 7 12" className="ml-[20px] shrink-0"><path d="M1 0v12l6-6z" fill="#c8c6c4" /></svg>
            </div>
            <div className="flex w-[158px] items-center justify-center border-x border-[#d2d0ce] bg-white">App Landscape</div>
            <div className="flex w-[111px] items-center justify-center border-b-[6px] border-r border-[#117865] border-r-[#d2d0ce] bg-white pt-[6px] font-semibold">Reviews</div>
            <div className="flex w-[140px] items-center justify-center bg-white">Apps Review</div>
            <div className="flex w-[51px] items-center justify-center bg-[#117865]">
              <svg width={16} height={16} viewBox="0 0 16 16" fill="none">
                <path d="M8 1v14M1 8h14" stroke="#fff" strokeWidth={3.4} />
              </svg>
            </div>
          </div>
        </div>

        {/* Visualizations */}
        <div className="flex w-[236px] shrink-0 flex-col border-l border-[#e1dfdd] bg-[#f3f2f1]">
          <div className="flex h-[50px] items-center justify-between pl-[9px] pr-[12px] pt-[2px]">
            <span className="text-[20px] font-semibold">Visualizations</span>
            <Chevrons />
          </div>
          <div className="ml-[9px] h-[20px] text-[14.5px] font-semibold leading-[20px]">Build visual</div>
          <div className="mt-[5px] flex h-[42px] items-center">
            <div className="ml-[9px] flex h-[42px] w-[42px] items-center justify-center rounded-[2px] bg-[#d2d0ce]">
              <svg width={32} height={32} viewBox="0 0 32 32" fill="none">
                <path d="M1 2h18" stroke="#333" strokeWidth={1.3} />
                <rect x={1} y={7} width={30} height={10} fill="#117865" stroke="#333" strokeWidth={1} strokeDasharray="2 1.500" />
                <rect x={1} y={21} width={30} height={10} fill="#117865" stroke="#333" strokeWidth={1} strokeDasharray="2 1.500" />
              </svg>
            </div>
            <svg width={30} height={32} viewBox="0 0 30 32" fill="none" className="ml-[53px] mt-[2px]">
              <path d="M1 13h6v14M7 13V1h10v14M17 6h3M1 13v12h6" stroke="#333" strokeWidth={1.3} />
              <path d="M28 11L15 24c-1 4-4 6-7 6 2-2 2-5 3-7 2-1 3-1 4 1" stroke="#333" strokeWidth={1.3} />
            </svg>
            <svg width={32} height={34} viewBox="0 0 32 34" fill="none" className="ml-[53px] mt-[2px]">
              <circle cx={14} cy={14} r={13} stroke="#252423" strokeWidth={1.3} />
              <path d="M3 15l6-4 6 4 8-7M8 17v8M12 18v9M16 19v8M20 17v9" stroke="#252423" strokeWidth={1.3} />
              <path d="M23 24l8 8" stroke="#252423" strokeWidth={2.4} />
            </svg>
          </div>
          <div className="relative h-[17px] border-b border-[#b3b0ad]">
            <svg width={18} height={10} viewBox="0 0 18 10" className="absolute bottom-[-1px] left-[21px]">
              <path d="M0 9.500h3L9 1l6 8.500h3" fill="#f3f2f1" stroke="#b3b0ad" strokeWidth={1} />
            </svg>
          </div>
          <div className="ml-[7px] mt-[10px] grid w-[220px] grid-cols-6">
            {viz.map((v, i) => (
              <div key={i} className="flex h-[36.5px] items-center justify-center">
                <Ic w={26} h={26} vb="0 0 26 26" className="overflow-visible">{v}</Ic>
              </div>
            ))}
          </div>
          <div className="ml-[17px] mt-[13px] flex h-[4px] gap-[5px]">
            <i className="h-[2.5px] w-[2.5px] rounded-full bg-[#333]" />
            <i className="h-[2.5px] w-[2.5px] rounded-full bg-[#333]" />
            <i className="h-[2.5px] w-[2.5px] rounded-full bg-[#333]" />
          </div>
          <div className="mt-[26px] h-px bg-[#e1dfdd]" />
          <VLabel text="Data" mt={9} />
          <div className="mx-[6px] mt-[8px] h-[45px] w-[222px] border border-dashed border-[#d2d0ce] p-[2px]">
            <div className="flex h-[29px] items-center rounded-[2px] border border-[#d2d0ce] bg-[#e8e7e5] pl-[5px] text-[15px] tracking-[-0.1px] text-[#3b3a39]">
              <span className="whitespace-nowrap">Average of helpful_rev...</span>
              <svg width={15} height={8} viewBox="0 0 15 8" fill="none" className="ml-auto shrink-0">
                <path d="M1 1l6.500 6L14 1" stroke="#444" strokeWidth={1.1} />
              </svg>
              <svg width={11} height={11} viewBox="0 0 11 11" fill="none" className="ml-[7px] mr-[5px] shrink-0">
                <path d="M1 1l9 9M10 1l-9 9" stroke="#444" strokeWidth={1.2} />
              </svg>
            </div>
          </div>
          <VLabel text="Small multiples" mt={13} />
          <Zone text="Add data fields here" mt={8} />
          <VLabel text="Tooltips" mt={15} />
          <Zone text="Add data fields here" mt={8} />
          <VLabel text="Drill through" mt={15} bold />
          <div className="mr-[29px] mt-[10px] flex h-[24px] items-center justify-between pl-[14px] text-[15px] tracking-[-0.1px] text-[#3b3a39]">
            <span>Cross-report</span>
            <div className="flex h-[21px] w-[42px] items-center justify-between rounded-full border border-[#a19f9d] bg-white px-[4px] text-[11px] text-[#8a8886]">
              <i className="h-[11px] w-[11px] rounded-full bg-[#605e5c]" />
              <span>Off</span>
            </div>
          </div>
          <div className="mr-[29px] mt-[11px] flex h-[24px] items-center justify-between pl-[14px] text-[15px] tracking-[-0.1px] text-[#3b3a39]">
            <span>Keep all filters</span>
            <div className="flex h-[21px] w-[42px] items-center justify-between rounded-full bg-[#117865] px-[6px] text-[11px] text-white">
              <span>On</span>
              <i className="h-[11px] w-[11px] rounded-full bg-white" />
            </div>
          </div>
          <Zone text="Add drill-through fields here" mt={12} h={32} pl={9} />
        </div>

        {/* Data */}
        <div className="relative min-w-0 flex-1 border-l border-[#e1dfdd] bg-[#f3f2f1]">
          <div className="flex h-[52px] items-center justify-between pl-[10px] pr-[5px]">
            <span className="text-[20px] font-semibold">Data</span>
            <Chevrons />
          </div>
          <div className="ml-[6px] mt-[9px] flex h-[30px] items-center rounded-l-[3px] border-b-2 border-l border-t border-[#c8c6c4] border-b-[#8a8886] bg-white pl-[14px]">
            <svg width={18} height={20} viewBox="0 0 18 20" fill="none">
              <circle cx={7.500} cy={7.500} r={6.500} stroke="#605e5c" strokeWidth={1.3} />
              <path d="M12 12.500l5 6" stroke="#605e5c" strokeWidth={1.3} />
            </svg>
            <span className="ml-[10px] text-[16.5px] text-[#605e5c]">Search</span>
          </div>
          <div className="mt-[12px]">
            <TableRow name="apps" />
            {fields.map((f) => (
              <FieldRow key={f[0]} f={f} />
            ))}
            <TableRow name="reviews" badge />
            {fields2.map((f) => (
              <FieldRow key={f[0] + f[1]} f={f} />
            ))}
          </div>
        </div>
      </div>

      {/* Watermark */}
      <div className="pointer-events-none absolute left-[1835px] top-[1170px] z-20 text-[#b4b3b2]">
        <div className="text-[26px] leading-[34px]">Activate Windows</div>
        <div className="mt-[2px] text-[18px] leading-[24px] tracking-normal">Go to Settings to activate Windows.</div>
      </div>
    </div>
  );
}
